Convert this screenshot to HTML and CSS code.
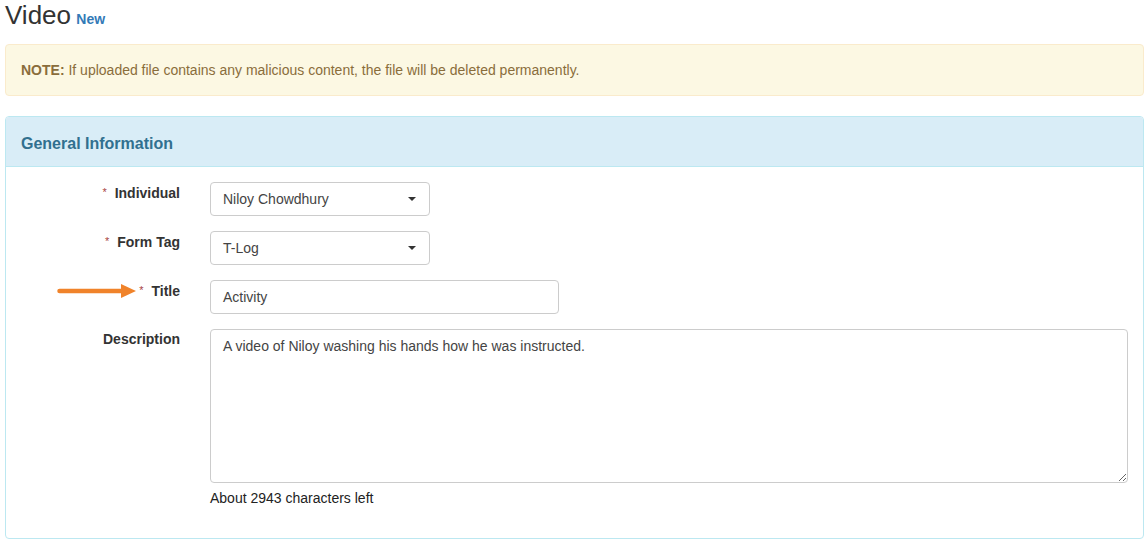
FILE: index.html
```html
<!DOCTYPE html>
<html>
<head>
<meta charset="utf-8">
<title>Video New</title>
<link rel="stylesheet" href="styles.css">
</head>
<body>
<div class="page">
  <h1 class="page-title">Video <small class="tag">New</small></h1>

  <div class="alert"><strong>NOTE:</strong> If uploaded file contains any malicious content, the file will be deleted permanently.</div>

  <div class="panel">
    <div class="panel-heading">General Information</div>
    <div class="panel-body">
      <div class="form-row">
        <div class="label"><span class="req">*</span>Individual</div>
        <div class="control select w-sel"><span>Niloy Chowdhury</span><i class="caret"></i></div>
      </div>
      <div class="form-row">
        <div class="label"><span class="req">*</span>Form Tag</div>
        <div class="control select w-sel"><span>T-Log</span><i class="caret"></i></div>
      </div>
      <div class="form-row">
        <div class="label label-arrow">
          <svg class="arrow" width="80" height="16" viewBox="0 0 80 16">
            <line x1="2.5" y1="8" x2="66" y2="8" stroke="#f0832a" stroke-width="4.5" stroke-linecap="round"/>
            <polygon points="64,1 79,8 64,15" fill="#f0832a"/>
          </svg>
          <span class="req">*</span>Title
        </div>
        <div class="control w-title">Activity</div>
      </div>
      <div class="form-row last">
        <div class="label">Description</div>
        <div class="field">
          <textarea class="control textarea" readonly>A video of Niloy washing his hands how he was instructed.</textarea>
          <div class="help">About 2943 characters left</div>
        </div>
      </div>
    </div>
  </div>
</div>
</body>
</html>
```

FILE: styles.css
```css
* { box-sizing: border-box; }
html, body { margin: 0; padding: 0; background: #fff; }
body {
  font-family: "Liberation Sans", Arial, sans-serif;
  font-size: 14px;
  color: #333;
}
.page { padding: 1px 4px 0 5px; }

.page-title {
  margin: 0;
  font-size: 26px;
  font-weight: 400;
  line-height: 28px;
  color: #333;
}
.page-title .tag {
  font-size: 14px;
  font-weight: 700;
  line-height: 1;
  margin-left: -2px;
  color: #337ab7;
}

.alert {
  margin-top: 15px;
  padding: 15px 15px;
  line-height: 20px;
  font-size: 14px;
  color: #8a6d3b;
  background: #fcf8e3;
  border: 1px solid #faebcc;
  border-radius: 4px;
}

.panel {
  margin-top: 20px;
  border: 1px solid #bce8f1;
  border-radius: 4px;
  background: #fff;
}
.panel-heading {
  padding: 17px 15px 13px;
  line-height: 19px;
  font-size: 16px;
  font-weight: 700;
  color: #31708f;
  background: #d9edf7;
  border-bottom: 1px solid #bce8f1;
  border-radius: 3px 3px 0 0;
}
.panel-body { padding: 15px; }

.form-row {
  display: grid;
  grid-template-columns: 159px 1fr;
  column-gap: 30px;
  margin-bottom: 15px;
  align-items: start;
}
.form-row.last { margin-bottom: 0; }

.label {
  text-align: right;
  font-weight: 700;
  line-height: 20px;
  color: #333;
  position: relative;
}
.req {
  color: #a94442;
  font-weight: 400;
  font-size: 11px;
  vertical-align: 2px;
  margin-right: 8px;
}
.arrow {
  position: absolute;
  left: 36px;
  top: 3px;
}

.control {
  height: 34px;
  padding: 6px 12px;
  line-height: 20px;
  font-size: 14px;
  color: #444;
  background: #fff;
  border: 1px solid #ccc;
  border-radius: 4px;
  font-family: "Liberation Sans", Arial, sans-serif;
}
.select {
  display: flex;
  align-items: center;
  justify-content: space-between;
}
.caret {
  display: block;
  width: 0;
  height: 0;
  border-left: 4px solid transparent;
  border-right: 4px solid transparent;
  border-top: 4px solid #333;
  margin-right: 1px;
}
.w-sel { width: 220px; }
.w-title { width: 349px; }

.field { display: flex; flex-direction: column; }
.textarea {
  display: block;
  width: 100%;
  height: 154px;
  resize: vertical;
  margin: 0;
  outline: none;
}
.help {
  margin-top: 5px;
  margin-bottom: 15px;
  line-height: 20px;
  color: #222;
}
```
